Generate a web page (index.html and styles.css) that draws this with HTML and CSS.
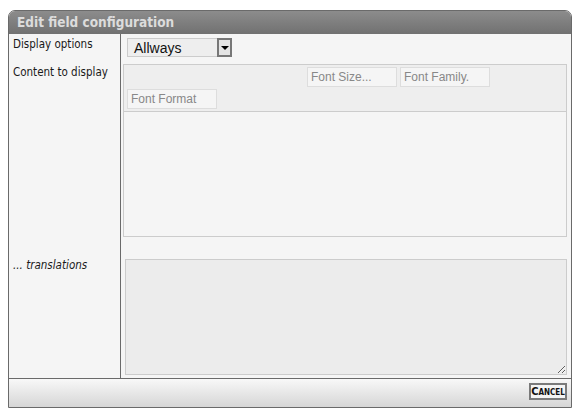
FILE: index.html
```html
<!DOCTYPE html>
<html>
    <head>
        <title>Edit field configuration</title>
        <link rel="stylesheet" href="styles.css">
    </head>
    <body>
      <div class="dialog">
        <div class="dialogTitle">Edit field configuration</div>
        <div class="dialogBody">
          <div class="label">Display options</div>
          <div class="field">
            <div class="select">
              <span class="selectText">Allways</span>
              <span class="selectBtn"><span class="arrow"></span></span>
            </div>
          </div>

          <div class="label">Content to display</div>
          <div class="field">
            <div class="editor">
              <div class="toolbar">
                <div class="toolbarRow right">
                  <span class="toolInput">Font Size...</span>
                  <span class="toolInput">Font Family.</span>
                </div>
                <div class="toolbarRow">
                  <span class="toolInput">Font Format</span>
                </div>
              </div>
              <div class="editArea"></div>
            </div>
          </div>

          <div class="label italic">... translations</div>
          <div class="field">
            <textarea class="translations"></textarea>
          </div>
        </div>
        <div class="dialogFooter">
          <span class="cancelBtn">Cancel</span>
        </div>
      </div>
    </body>
</html>
```

FILE: styles.css
```css
* {
  box-sizing: border-box;
}

body {
  margin: 0;
  background: #fff;
  font-family: "DejaVu Sans Condensed", "DejaVu Sans", sans-serif;
  font-size: 11px;
  color: #222;
}

/* The dialog window */
.dialog {
  margin: 10px 0 0 8px;
  width: 564px;
  height: 398px;
  border: 1px solid #6a6a6a;
  border-radius: 7px 7px 0 0;
  background: #f5f5f5;
  display: flex;
  flex-direction: column;
}

.dialogTitle {
  height: 23px;
  line-height: 22px;
  padding-left: 8px;
  border-radius: 6px 6px 0 0;
  background: linear-gradient(#8c8c8c, #717171);
  color: #dcdcdc;
  font-weight: bold;
  font-size: 13.5px;
}

/* label column + field column */
.dialogBody {
  flex: 1;
  display: grid;
  grid-template-columns: 112px 1fr;
  grid-template-rows: 28px 193px 1fr;
}

.label {
  border-right: 1px solid #6a6a6a;
  padding: 3px 0 0 4px;
  line-height: 14px;
  font-size: 11.5px;
  color: #1a1a1a;
}

.label.italic {
  font-style: italic;
}

.field {
  padding-left: 2px;
}

/* dropdown */
.select {
  margin: 4px 0 0 4px;
  width: 105px;
  height: 19px;
  border: 1px solid #ccc;
  background: #eee;
  display: flex;
  align-items: center;
  justify-content: space-between;
}

.selectText {
  padding-left: 6px;
  font-family: "Liberation Sans", Arial, sans-serif;
  font-size: 14px;
  color: #111;
}

.selectBtn {
  width: 15px;
  height: 19px;
  margin-right: -1px;
  border: 2px solid #777;
  background: #e4e4e4;
  display: flex;
  align-items: center;
  justify-content: center;
}

.arrow {
  border-left: 4px solid transparent;
  border-right: 4px solid transparent;
  border-top: 4px solid #000;
}

/* rich text editor */
.editor {
  margin-top: 2px;
  width: 444px;
  height: 173px;
  border: 1px solid #ccc;
  display: flex;
  flex-direction: column;
}

.toolbar {
  height: 47px;
  background: #eee;
  border-bottom: 1px solid #ccc;
  padding: 2px 0 0 3px;
}

.toolbarRow {
  display: flex;
  gap: 3px;
  height: 22px;
}

.toolbarRow.right {
  padding-left: 180px;
}

.toolInput {
  width: 90px;
  height: 20px;
  border: 1px solid #ddd;
  background: #f5f5f5;
  padding-left: 3px;
  line-height: 18px;
  font-family: "Liberation Sans", Arial, sans-serif;
  font-size: 12px;
  color: #888;
}

.editArea {
  flex: 1;
  background: #f5f5f5;
}

textarea.translations {
  display: block;
  margin: 4px 0 0 2px;
  width: 442px;
  height: 116px;
  border: 1px solid #ccc;
  background: #ececec;
  resize: both;
  outline: none;
}

/* button bar */
.dialogFooter {
  height: 29px;
  border-top: 1px solid #6a6a6a;
  background: linear-gradient(#f8f8f8, #d6d6d6);
  display: flex;
  justify-content: flex-end;
  padding: 4px 4px 0 0;
}

.cancelBtn {
  width: 38px;
  height: 17px;
  border: 2px solid #7a7a7a;
  background: #f4f4f4;
  text-align: center;
  line-height: 13px;
  font-family: "DejaVu Sans Condensed", "DejaVu Sans", sans-serif;
  font-weight: bold;
  font-size: 11px;
  font-variant: small-caps;
  color: #111;
}
```
